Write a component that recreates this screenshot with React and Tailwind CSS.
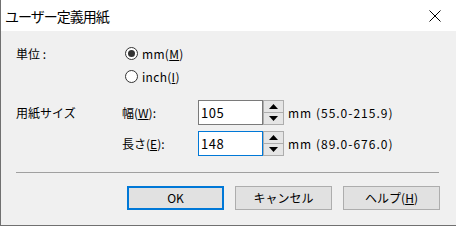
import React from 'react'

const font = { fontFamily: '"Noto Sans CJK JP", "Noto Sans", sans-serif' }

function Radio({ checked, children }) {
  return (
    <div className="flex items-center h-[23px]">
      <span className="w-[13px] h-[13px] rounded-full border border-[#333] bg-white flex items-center justify-center">
        {checked && <span className="w-[7px] h-[7px] rounded-full bg-[#333]" />}
      </span>
      <span className="ml-[4px] text-[12px] leading-none tracking-[0.3px]">{children}</span>
    </div>
  )
}

function Spin({ value, focused }) {
  return (
    <div className="flex items-center">
      <div
        className={`w-[65px] h-[25px] bg-white border flex items-center pl-[2px] text-[13px] tracking-[0.5px] ${
          focused ? 'border-[#0078d7]' : 'border-[#7a7a7a]'
        }`}
      >
        {value}
      </div>
      <div className="w-[21px] h-[25px] flex flex-col">
        <button className="h-[12.5px] flex-1 bg-[#e5e5e5] border border-[#adadad] flex items-center justify-center">
          <svg width="9" height="5" viewBox="0 0 9 5"><path d="M4.5 0L9 5H0z" fill="#000" /></svg>
        </button>
        <button className="h-[12.5px] flex-1 bg-[#e5e5e5] border border-t-0 border-[#adadad] flex items-center justify-center">
          <svg width="9" height="5" viewBox="0 0 9 5"><path d="M0 0H9L4.5 5z" fill="#000" /></svg>
        </button>
      </div>
    </div>
  )
}

function Btn({ children, primary }) {
  return (
    <button
      className={`w-[97px] h-[24px] bg-[#e1e1e1] text-[12px] flex items-center justify-center ${
        primary ? 'border-2 border-[#0078d7]' : 'border border-[#adadad]'
      }`}
    >
      {children}
    </button>
  )
}

export default function App() {
  return (
    <div style={font} className="w-[456px] h-[226px] bg-[#f0f0f0] flex flex-col border-l border-b border-[#707070] text-black overflow-hidden">
      {/* title bar */}
      <div className="h-[31px] bg-white flex items-center justify-between pl-[4px] pr-[15px]">
        <span className="text-[14px] leading-none tracking-[-1px]">ユーザー定義用紙</span>
        <svg width="12" height="12" viewBox="0 0 12 12">
          <path d="M0.5 0.5L11.5 11.5M11.5 0.5L0.5 11.5" stroke="#000" strokeWidth="1" />
        </svg>
      </div>

      <div className="flex flex-col pl-[15px] pt-[11px]">
        <div className="flex">
          <div className="w-[109px] h-[23px] flex items-center text-[12px]">単位 :</div>
          <div className="flex flex-col">
            <Radio checked>
              mm(<span className="underline">M</span>)
            </Radio>
            <Radio>
              inch(<span className="underline">I</span>)
            </Radio>
          </div>
        </div>

        <div className="flex mt-[12px]">
          <div className="w-[106px] h-[25px] flex items-center text-[12px]">用紙サイズ</div>
          <div className="flex flex-col gap-[6px]">
            <div className="flex items-center">
              <span className="w-[76px] text-[12px]">
                幅(<span className="underline">W</span>):
              </span>
              <Spin value="105" />
              <span className="ml-[4px] text-[12px] tracking-[1px]">mm (55.0-215.9)</span>
            </div>
            <div className="flex items-center">
              <span className="w-[76px] text-[12px]">
                長さ(<span className="underline">E</span>):
              </span>
              <Spin value="148" focused />
              <span className="ml-[4px] text-[12px] tracking-[1px]">mm (89.0-676.0)</span>
            </div>
          </div>
        </div>

        <div className="mt-[16px] w-[423px] h-px bg-[#a0a0a0]" />

        <div className="flex gap-[11px] mt-[13px] pl-[111px]">
          <Btn primary>OK</Btn>
          <Btn>キャンセル</Btn>
          <Btn>
            ヘルプ(<span className="underline">H</span>)
          </Btn>
        </div>
      </div>
    </div>
  )
}
